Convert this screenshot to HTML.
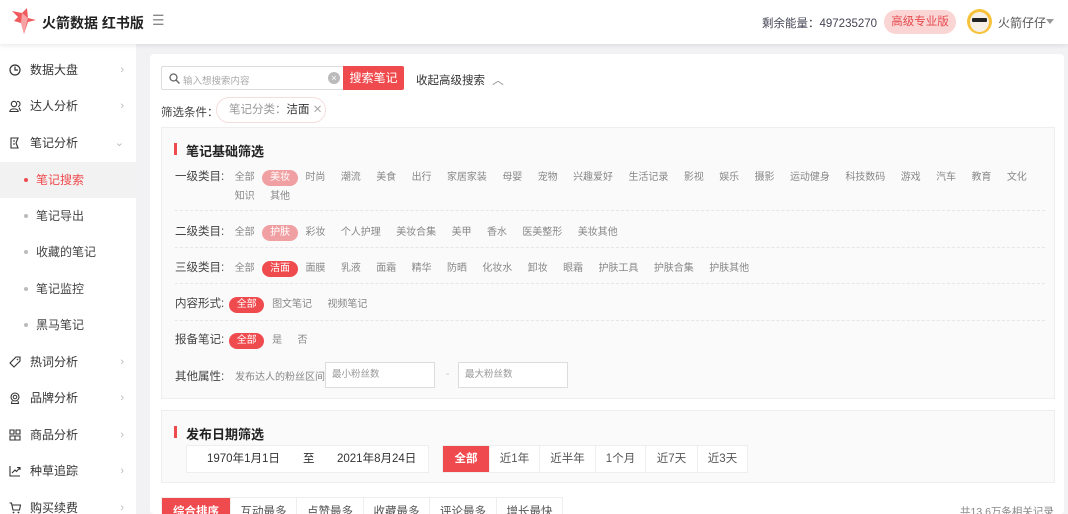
<!DOCTYPE html>
<html><head><meta charset="utf-8"><style>
*{margin:0;padding:0;box-sizing:border-box}
html,body{width:1068px;height:514px;overflow:hidden}
body{background:#f2f2f4;font-family:"Liberation Sans","Noto Sans CJK SC",sans-serif;position:relative;color:#333}
.abs{position:absolute}
.hdr{left:0;top:0;width:1068px;height:44px;background:#fff;box-shadow:0 2px 4px rgba(0,0,0,.08);z-index:2}
.side{left:0;top:44px;width:136px;height:470px;background:#fff}
.mi{position:absolute;left:0;width:136px;height:36px;font-size:12px;color:#333;line-height:36px}
.mi .ic{position:absolute;left:9px;top:12px;width:12px;height:12px}
.mi .t{position:absolute;left:30px}
.mi .ar{position:absolute;right:12px;color:#bbb;font-size:11px}
.sub{position:absolute;left:0;width:136px;height:36px;line-height:36px;font-size:12px;color:#444}
.sub .d{position:absolute;left:24px;top:16px;width:4px;height:4px;border-radius:50%;background:#bbb}
.sub .t{position:absolute;left:36px}
.card{left:150px;top:54px;width:914px;height:460px;background:#fff;border-radius:4px;overflow:hidden}
.box{position:absolute;background:#fafafa;border:1px solid #eee}
.row{position:absolute;left:13px;font-size:10px;color:#888;white-space:nowrap}
.lab{font-size:11.5px;color:#444;display:inline-block;width:52px}
.it{display:inline-block;padding:0 7.7px;height:16px;line-height:16px;border-radius:8px}
.on{background:#ef4b4f;color:#fff}
.on2{background:#f0a0a2;color:#fff}
.sep{position:absolute;left:13px;width:870px;border-top:1px dashed #e6e6e6}
</style></head><body>
<div class="abs hdr">
 <svg class="abs" style="left:12px;top:8px" width="24" height="26" viewBox="0 0 24 26"><path d="M0 3 L10 5 L15 0 L16 10 L24 12 L16 14 L12 26 L9 15 L2 13 L6 9Z" fill="#ef5a5e"/><path d="M10 5 L16 10 L12 26 L9 15Z" fill="#f7a2a4"/></svg>
 <div class="abs" style="left:42px;top:13px;font-size:14px;font-weight:bold;color:#222">火箭数据 红书版</div>
 <div class="abs" style="left:152px;top:12px;font-size:14px;color:#888">☰</div>
 <div class="abs" style="left:762px;top:15px;font-size:11.5px;color:#445">剩余能量：497235270</div>
 <div class="abs" style="left:884px;top:10px;width:72px;height:24px;border-radius:12px;background:#fbd4d4;color:#e64a4e;font-size:11.5px;line-height:24px;text-align:center">高级专业版</div>
 <div class="abs" style="left:967px;top:9px;width:25px;height:25px;border-radius:50%;background:#f7c23a"></div>
 <div class="abs" style="left:970px;top:12px;width:19px;height:20px;border-radius:50%;background:#f6f0e6"></div>
 <div class="abs" style="left:972px;top:18px;width:15px;height:4px;background:#222;border-radius:1px"></div>
 <div class="abs" style="left:998px;top:14px;font-size:12px;color:#555">火箭仔仔</div>
 <div class="abs" style="left:1046px;top:19px;border:4px solid transparent;border-top:5px solid #999"></div>
</div>
<div class="abs side">
 <div class="mi" style="top:8px"><svg class="ic" viewBox="0 0 12 12"><circle cx="6" cy="6" r="5" fill="none" stroke="#333" stroke-width="1.2"/><path d="M6 2.5V6H9" fill="none" stroke="#333" stroke-width="1.2"/></svg><span class="t">数据大盘</span><span class="ar">›</span></div>
 <div class="mi" style="top:44px"><svg class="ic" viewBox="0 0 12 12"><circle cx="5" cy="4" r="2.7" fill="none" stroke="#333" stroke-width="1.1"/><path d="M0.8 11.5C1 8 9 8 9.2 11.5Z M8 1.5A2.5 2.5 0 0 1 9 6.5 M10 7.5 11.5 11" fill="none" stroke="#333" stroke-width="1.1"/></svg><span class="t">达人分析</span><span class="ar">›</span></div>
 <div class="mi" style="top:81px"><svg class="ic" viewBox="0 0 12 12"><path d="M2 1H9L7 6 9 11H2Z M4 4H6 M4 7H6" fill="none" stroke="#333" stroke-width="1.1"/></svg><span class="t">笔记分析</span><span class="ar">⌄</span></div>
 <div class="sub" style="top:118px;background:#f2f2f2;color:#ef4b4f"><span class="d" style="background:#ef4b4f"></span><span class="t">笔记搜索</span></div>
 <div class="sub" style="top:154px"><span class="d"></span><span class="t">笔记导出</span></div>
 <div class="sub" style="top:190px"><span class="d"></span><span class="t">收藏的笔记</span></div>
 <div class="sub" style="top:227px"><span class="d"></span><span class="t">笔记监控</span></div>
 <div class="sub" style="top:263px"><span class="d"></span><span class="t">黑马笔记</span></div>
 <div class="mi" style="top:300px"><svg class="ic" viewBox="0 0 12 12"><path d="M1 7 7 1H11V5L5 11Z" fill="none" stroke="#333" stroke-width="1.1"/><circle cx="8.5" cy="3.5" r=".8" fill="#333"/></svg><span class="t">热词分析</span><span class="ar">›</span></div>
 <div class="mi" style="top:336px"><svg class="ic" viewBox="0 0 12 12"><circle cx="6" cy="5" r="4" fill="none" stroke="#333" stroke-width="1.1"/><circle cx="6" cy="5" r="1.8" fill="none" stroke="#333"/><path d="M3 9 2.5 11.5H9.5L9 9" fill="none" stroke="#333"/></svg><span class="t">品牌分析</span><span class="ar">›</span></div>
 <div class="mi" style="top:373px"><svg class="ic" viewBox="0 0 12 12"><path d="M1 1H5V5H1Z M7 1H11V5H7Z M1 7H11V11H1Z M6 7V11" fill="none" stroke="#333" stroke-width="1.1"/></svg><span class="t">商品分析</span><span class="ar">›</span></div>
 <div class="mi" style="top:409px"><svg class="ic" viewBox="0 0 12 12"><path d="M1 1V11H11 M3 8 6 5 7.5 6.5 11 2.5 M8 2.5H11V5" fill="none" stroke="#333" stroke-width="1.1"/></svg><span class="t">种草追踪</span><span class="ar">›</span></div>
 <div class="mi" style="top:446px"><svg class="ic" viewBox="0 0 12 12"><path d="M0.5 1H2.5L4 8H10.5L11.5 3H3" fill="none" stroke="#333" stroke-width="1.1"/><circle cx="4.5" cy="10.5" r=".9" fill="#333"/><circle cx="9.5" cy="10.5" r=".9" fill="#333"/></svg><span class="t">购买续费</span><span class="ar">›</span></div>
</div>
<div class="abs card">
 <div class="abs" style="left:11px;top:12px;width:184px;height:24px;border:1px solid #ddd;border-right:none;border-radius:2px 0 0 2px"></div>
 <svg class="abs" style="left:19px;top:19px" width="11" height="11" viewBox="0 0 11 11"><circle cx="4.5" cy="4.5" r="3.5" fill="none" stroke="#666" stroke-width="1.3"/><path d="M7 7 10.5 10.5" stroke="#666" stroke-width="1.4"/></svg>
 <div class="abs" style="left:33px;top:19px;font-size:9.5px;color:#aaa">输入想搜索内容</div>
 <div class="abs" style="left:178px;top:18px;width:12px;height:12px;border-radius:50%;background:#bbb;color:#fff;font-size:9px;line-height:12px;text-align:center">×</div>
 <div class="abs" style="left:193px;top:12px;width:61px;height:24px;background:#ef4b4f;color:#fff;font-size:12px;line-height:24px;text-align:center;border-radius:0 2px 2px 0">搜索笔记</div>
 <div class="abs" style="left:266px;top:18px;font-size:11.5px;color:#333">收起高级搜索 <span style="color:#888;margin-left:4px">︿</span></div>
 <div class="abs" style="left:11px;top:50px;font-size:11.5px;color:#444">筛选条件：</div>
 <div class="abs" style="left:66px;top:43px;width:110px;height:26px;border:1px solid #f6dede;border-radius:13px;font-size:11.5px;line-height:24px;padding-left:12px;color:#999">笔记分类：<span style="color:#333">洁面</span> <span style="color:#aaa">✕</span></div>

 <div class="box" style="left:11px;top:73px;width:894px;height:272px">
  <div class="abs" style="left:12px;top:15px;width:3px;height:12px;background:#ef4b4f"></div>
  <div class="abs" style="left:24px;top:13px;font-size:13px;font-weight:bold;color:#222">笔记基础筛选</div>
  <div class="row" style="top:40px"><span class="lab">一级类目:</span><span class="it">全部</span><span class="it on2">美妆</span><span class="it">时尚</span><span class="it">潮流</span><span class="it">美食</span><span class="it">出行</span><span class="it">家居家装</span><span class="it">母婴</span><span class="it">宠物</span><span class="it">兴趣爱好</span><span class="it">生活记录</span><span class="it">影视</span><span class="it">娱乐</span><span class="it">摄影</span><span class="it">运动健身</span><span class="it">科技数码</span><span class="it">游戏</span><span class="it">汽车</span><span class="it">教育</span><span class="it">文化</span></div>
  <div class="row" style="top:61px"><span class="lab"></span><span class="it">知识</span><span class="it">其他</span></div>
  <div class="sep" style="top:82px"></div>
  <div class="row" style="top:95px"><span class="lab">二级类目:</span><span class="it">全部</span><span class="it on2">护肤</span><span class="it">彩妆</span><span class="it">个人护理</span><span class="it">美妆合集</span><span class="it">美甲</span><span class="it">香水</span><span class="it">医美整形</span><span class="it">美妆其他</span></div>
  <div class="sep" style="top:119px"></div>
  <div class="row" style="top:131px"><span class="lab">三级类目:</span><span class="it">全部</span><span class="it on">洁面</span><span class="it">面膜</span><span class="it">乳液</span><span class="it">面霜</span><span class="it">精华</span><span class="it">防晒</span><span class="it">化妆水</span><span class="it">卸妆</span><span class="it">眼霜</span><span class="it">护肤工具</span><span class="it">护肤合集</span><span class="it">护肤其他</span></div>
  <div class="sep" style="top:155px"></div>
  <div class="row" style="top:167px"><span class="lab" style="width:54px">内容形式:</span><span class="it on">全部</span><span class="it">图文笔记</span><span class="it">视频笔记</span></div>
  <div class="sep" style="top:192px"></div>
  <div class="row" style="top:203px"><span class="lab" style="width:54px">报备笔记:</span><span class="it on">全部</span><span class="it">是</span><span class="it">否</span></div>
  <div class="row" style="top:240px"><span class="lab" style="width:60px">其他属性:</span>发布达人的粉丝区间:</div>
  <div class="abs" style="left:163px;top:234px;width:110px;height:26px;border:1px solid #ddd;background:#fff;font-size:9.5px;color:#999;line-height:24px;padding-left:6px">最小粉丝数</div>
  <div class="abs" style="left:284px;top:241px;font-size:10px;color:#bbb">-</div>
  <div class="abs" style="left:296px;top:234px;width:110px;height:26px;border:1px solid #ddd;background:#fff;font-size:9.5px;color:#999;line-height:24px;padding-left:6px">最大粉丝数</div>
 </div>

 <div class="box" style="left:11px;top:356px;width:894px;height:73px">
  <div class="abs" style="left:12px;top:15px;width:3px;height:12px;background:#ef4b4f"></div>
  <div class="abs" style="left:24px;top:13px;font-size:13px;font-weight:bold;color:#222">发布日期筛选</div>
  <div class="abs" style="left:24px;top:34px;width:243px;height:28px;background:#fff;border:1px solid #eee;font-size:11.5px;color:#333;line-height:26px"><span style="position:absolute;left:20px">1970年1月1日</span><span style="position:absolute;left:116px">至</span><span style="position:absolute;left:150px">2021年8月24日</span></div>
  <div class="abs" style="left:280px;top:34px;height:28px;background:#fff;border:1px solid #eee;display:flex;font-size:11.5px;color:#555;line-height:26px">
   <span style="width:46px;text-align:center;background:#ef4b4f;color:#fff;font-weight:bold">全部</span><span style="width:50px;text-align:center;border-left:1px solid #eee">近1年</span><span style="width:56px;text-align:center;border-left:1px solid #eee">近半年</span><span style="width:50px;text-align:center;border-left:1px solid #eee">1个月</span><span style="width:52px;text-align:center;border-left:1px solid #eee">近7天</span><span style="width:50px;text-align:center;border-left:1px solid #eee">近3天</span>
  </div>
 </div>

 <div class="abs" style="left:11px;top:443px;height:30px;display:flex;font-size:11.5px;color:#555;line-height:28px;border:1px solid #eee;background:#fff">
  <span style="width:68px;text-align:center;background:#ef4b4f;color:#fff;font-weight:bold">综合排序</span><span style="width:66px;text-align:center;border-left:1px solid #eee">互动最多</span><span style="width:67px;text-align:center;border-left:1px solid #eee">点赞最多</span><span style="width:66px;text-align:center;border-left:1px solid #eee">收藏最多</span><span style="width:67px;text-align:center;border-left:1px solid #eee">评论最多</span><span style="width:66px;text-align:center;border-left:1px solid #eee">增长最快</span>
 </div>
 <div class="abs" style="left:810px;top:450px;font-size:10.5px;color:#888">共13.6万条相关记录</div>
</div>
</body></html>
